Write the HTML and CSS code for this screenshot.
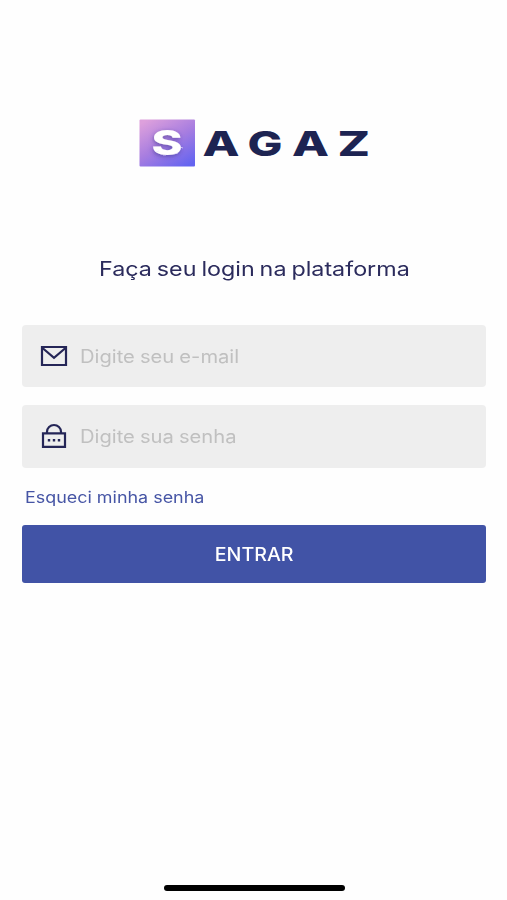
FILE: index.html
```html
<!DOCTYPE html>
<html lang="pt-BR">
<head>
<meta charset="utf-8">
<meta name="viewport" content="width=device-width, initial-scale=1">
<title>Sagaz</title>
<link rel="stylesheet" href="styles.css">
</head>
<body>
<main class="screen">
  <svg class="logo" width="232" height="48" viewBox="0 0 232 48" role="img" aria-label="SAGAZ">
    <defs>
      <linearGradient id="tile" x1="0.15" y1="0" x2="0.85" y2="1">
        <stop offset="0" stop-color="#dda0dc"/>
        <stop offset="0.5" stop-color="#a77de0"/>
        <stop offset="1" stop-color="#6464f0"/>
      </linearGradient>
      <filter id="shade" x="-30%" y="-30%" width="160%" height="160%">
        <feDropShadow dx="-0.5" dy="1.5" stdDeviation="2" flood-color="#38308c" flood-opacity="0.6"/>
      </filter>
    </defs>
    <rect x="1.5" y="0.5" width="55.5" height="47" rx="1" fill="url(#tile)"/>
    <g class="logo-text">
      <text class="logo-mark" x="13.5" y="36" textLength="31" lengthAdjust="spacingAndGlyphs" filter="url(#shade)">S</text>
      <text x="64.4" y="36.6" textLength="37" lengthAdjust="spacingAndGlyphs">A</text>
      <text x="109.4" y="36.6" textLength="35" lengthAdjust="spacingAndGlyphs">G</text>
      <text x="154" y="36.6" textLength="37" lengthAdjust="spacingAndGlyphs">A</text>
      <text x="199.5" y="36.6" textLength="32.5" lengthAdjust="spacingAndGlyphs">Z</text>
    </g>
    <path d="M18 33l3-1M25 36h3M36 35l4-1M42 28l3 1" stroke="#eee6ff" stroke-width="1" opacity="0.7"/>
  </svg>
  <h1 class="title"><span class="wide">Faça seu login na plataforma</span></h1>
  <form class="form">
    <label class="field">
      <svg class="icon" width="28" height="28" viewBox="0 0 28 28" fill="none" stroke="#252657" stroke-width="2.2">
        <path d="M2 5h24v18H2zM2.5 6L14 15.8 25.5 6"/>
      </svg>
      <input class="input" type="email" placeholder="Digite seu e-mail">
    </label>
    <label class="field">
      <svg class="icon" width="28" height="28" viewBox="0 0 28 28" fill="none" stroke="#252657" stroke-width="2.2">
        <path d="M3 11.3h22v13.5H3zM7 11V9.8a7 6.8 0 0 1 14 0V11"/>
        <path d="M7.8 18.3h2.4M12.8 18.3h2.4M17.8 18.3h2.4" stroke-width="2.4"/>
      </svg>
      <input class="input" type="password" placeholder="Digite sua senha">
    </label>
    <a class="forgot"><span class="wide">Esqueci minha senha</span></a>
    <button class="submit" type="button"><span class="wide">ENTRAR</span></button>
  </form>
  <div class="home-indicator"></div>
</main>
</body>
</html>
```
FILE: styles.css
```css
* { box-sizing: border-box; }
body {
  margin: 0;
  background: #fefefe;
  color: #2b2b5c;
  font-family: Inter, "Liberation Sans", sans-serif;
}
.screen {
  display: flex;
  flex-direction: column;
  align-items: center;
  height: 900px;
  padding: 118.5px 21px 9px 22px;
}
.logo { display: block; flex: none; }
.logo-text { font-weight: 800; font-size: 34px; fill: #1d2452; }
.logo-mark { fill: #fff; }
.wide { display: inline-block; transform: scaleX(1.165); white-space: nowrap; }
.title {
  margin: 87px 0 0;
  font-size: 20px;
  font-weight: 400;
  line-height: 30px;
  word-spacing: -1.4px;
}
.form {
  display: flex;
  flex-direction: column;
  width: 100%;
  margin-top: 41px;
}
.field {
  display: flex;
  align-items: center;
  height: 62.5px;
  margin-bottom: 18px;
  padding-left: 18px;
  border-radius: 4px;
  background: #eeeeee;
}
.icon { flex: none; }
.input {
  width: 320px;
  margin-left: 12px;
  padding: 2px 0 0;
  border: 0;
  outline: 0;
  background: transparent;
  color: #2b2b5c;
  font: 400 18px/26px Inter, "Liberation Sans", sans-serif;
  word-spacing: -0.5px;
  transform: scaleX(1.12);
  transform-origin: left;
}
.input::placeholder { color: #c0c0c0; opacity: 1; }
.forgot {
  align-self: flex-start;
  margin-left: 3px;
  color: #4655a5;
  font-size: 16px;
  line-height: 22px;
}
.forgot .wide { transform: scaleX(1.12); transform-origin: left; }
.submit {
  height: 58px;
  margin-top: 17.5px;
  padding: 2px 0 0;
  border: 0;
  border-radius: 3px;
  background: #4153a6;
  color: #fff;
  font: 500 18px/24px Inter, "Liberation Sans", sans-serif;
}
.submit .wide { transform: scaleX(1.09); }
.home-indicator {
  flex: none;
  width: 181px;
  height: 6px;
  margin-top: auto;
  border-radius: 3px;
  background: #000;
}
```
